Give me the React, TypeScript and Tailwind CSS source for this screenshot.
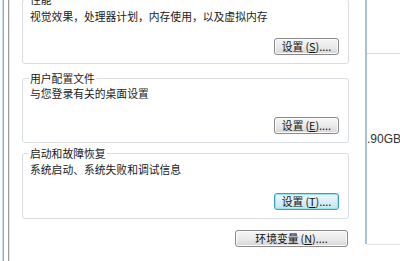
import React from 'react';

const font = "font-['Noto_Sans_CJK_SC','Noto_Sans',sans-serif]";

interface WinButtonProps {
  label: string;
  hotkey: string;
  width: string;
  focused?: boolean;
}

const WinButton: React.FC<WinButtonProps> = ({ label, hotkey, width, focused }) => (
  <button
    className={`${width} h-[17px] flex items-center justify-center rounded-[3px] border text-[10.8px] leading-none text-[#111] ${
      focused
        ? 'border-[#3fa0b4] bg-gradient-to-b from-[#eef8fc] via-[#d9eff9] to-[#c4e4f3] shadow-[inset_0_0_0_1px_#9fe0ee]'
        : 'border-[#8a8a8a] bg-gradient-to-b from-[#f6f6f6] via-[#ebebeb] to-[#d6d6d6] shadow-[inset_0_0_0_1px_#fbfbfb]'
    }`}
  >
    <span>{label}</span>
    <span className="ml-[2px]">(<span className="underline">{hotkey}</span>)....</span>
  </button>
);

interface GroupProps {
  title: string;
  desc: string;
  hotkey: string;
  pt: string;
  mt: string;
  height: string;
  focused?: boolean;
}

const Group: React.FC<GroupProps> = ({ title, desc, hotkey, pt, mt, height, focused }) => (
  <div className={`relative ${mt} ${height} flex flex-col rounded-[3px] border border-[#d8dde2] pl-[7px] pr-[9px] pb-[8px] ${pt}`}>
    <span className="absolute left-[6px] -top-[7px] bg-white px-[1px] text-[10.8px] leading-[12px] text-[#1a1a1a]">
      {title}
    </span>
    <p className="text-[10.8px] leading-[14px] text-[#1a1a1a]">{desc}</p>
    <div className="mt-auto flex justify-end">
      <WinButton label="设置" hotkey={hotkey} width="w-[65px]" focused={focused} />
    </div>
  </div>
);

export default function App() {
  return (
    <div className={`w-[400px] h-[261px] overflow-hidden bg-white flex ${font}`}>
      {/* left window edge */}
      <div className="w-[22px] flex shrink-0">
        <div className="ml-[2px] w-px bg-[#c9dcef]" />
        <div className="w-px bg-[#86acd4]" />
        <div className="ml-[4px] w-px bg-[#9c9c9c]" />
        <div className="w-px bg-[#e4e4e4]" />
      </div>

      {/* group boxes */}
      <div className="w-[327px] shrink-0 flex flex-col">
        <Group
          title="性能"
          desc="视觉效果，处理器计划，内存使用，以及虚拟内存"
          hotkey="S"
          pt="pt-[9px]"
          mt="-mt-px"
          height="h-[65px]"
        />
        <Group
          title="用户配置文件"
          desc="与您登录有关的桌面设置"
          hotkey="E"
          pt="pt-[7px]"
          mt="mt-[14px]"
          height="h-[65px]"
        />
        <Group
          title="启动和故障恢复"
          desc="系统启动、系统失败和调试信息"
          hotkey="T"
          pt="pt-[8px]"
          mt="mt-[10px]"
          height="h-[66px]"
          focused
        />
        <div className="mt-[11px] flex justify-end pr-px">
          <WinButton label="环境变量" hotkey="N" width="w-[113px]" />
        </div>
      </div>

      {/* background window on the right */}
      <div className="flex-1 flex overflow-hidden">
        <div className="ml-[10px] w-px bg-[#d6d6d6]" />
        <div className="ml-[6px] w-[8px] h-[244px] flex flex-col border border-[#a9bfd6] border-t-0">
          <div className="h-[28px] bg-[#eef3f8]" />
          <div className="flex-1 bg-gradient-to-r from-[#b5d2ee] via-[#c9def3] to-[#a9c8e8]" />
        </div>
        <div className="flex-1 flex flex-col">
          <div className="mt-[53px] h-px bg-[#dcdcdc]" />
          <span className="mt-[78px] text-[12px] leading-[15px] text-[#333] whitespace-nowrap font-['Liberation_Sans',sans-serif]">
            .90GB
          </span>
          <div className="mt-auto mb-[16px] h-px bg-[#e0e0e0]" />
        </div>
      </div>
    </div>
  );
}
